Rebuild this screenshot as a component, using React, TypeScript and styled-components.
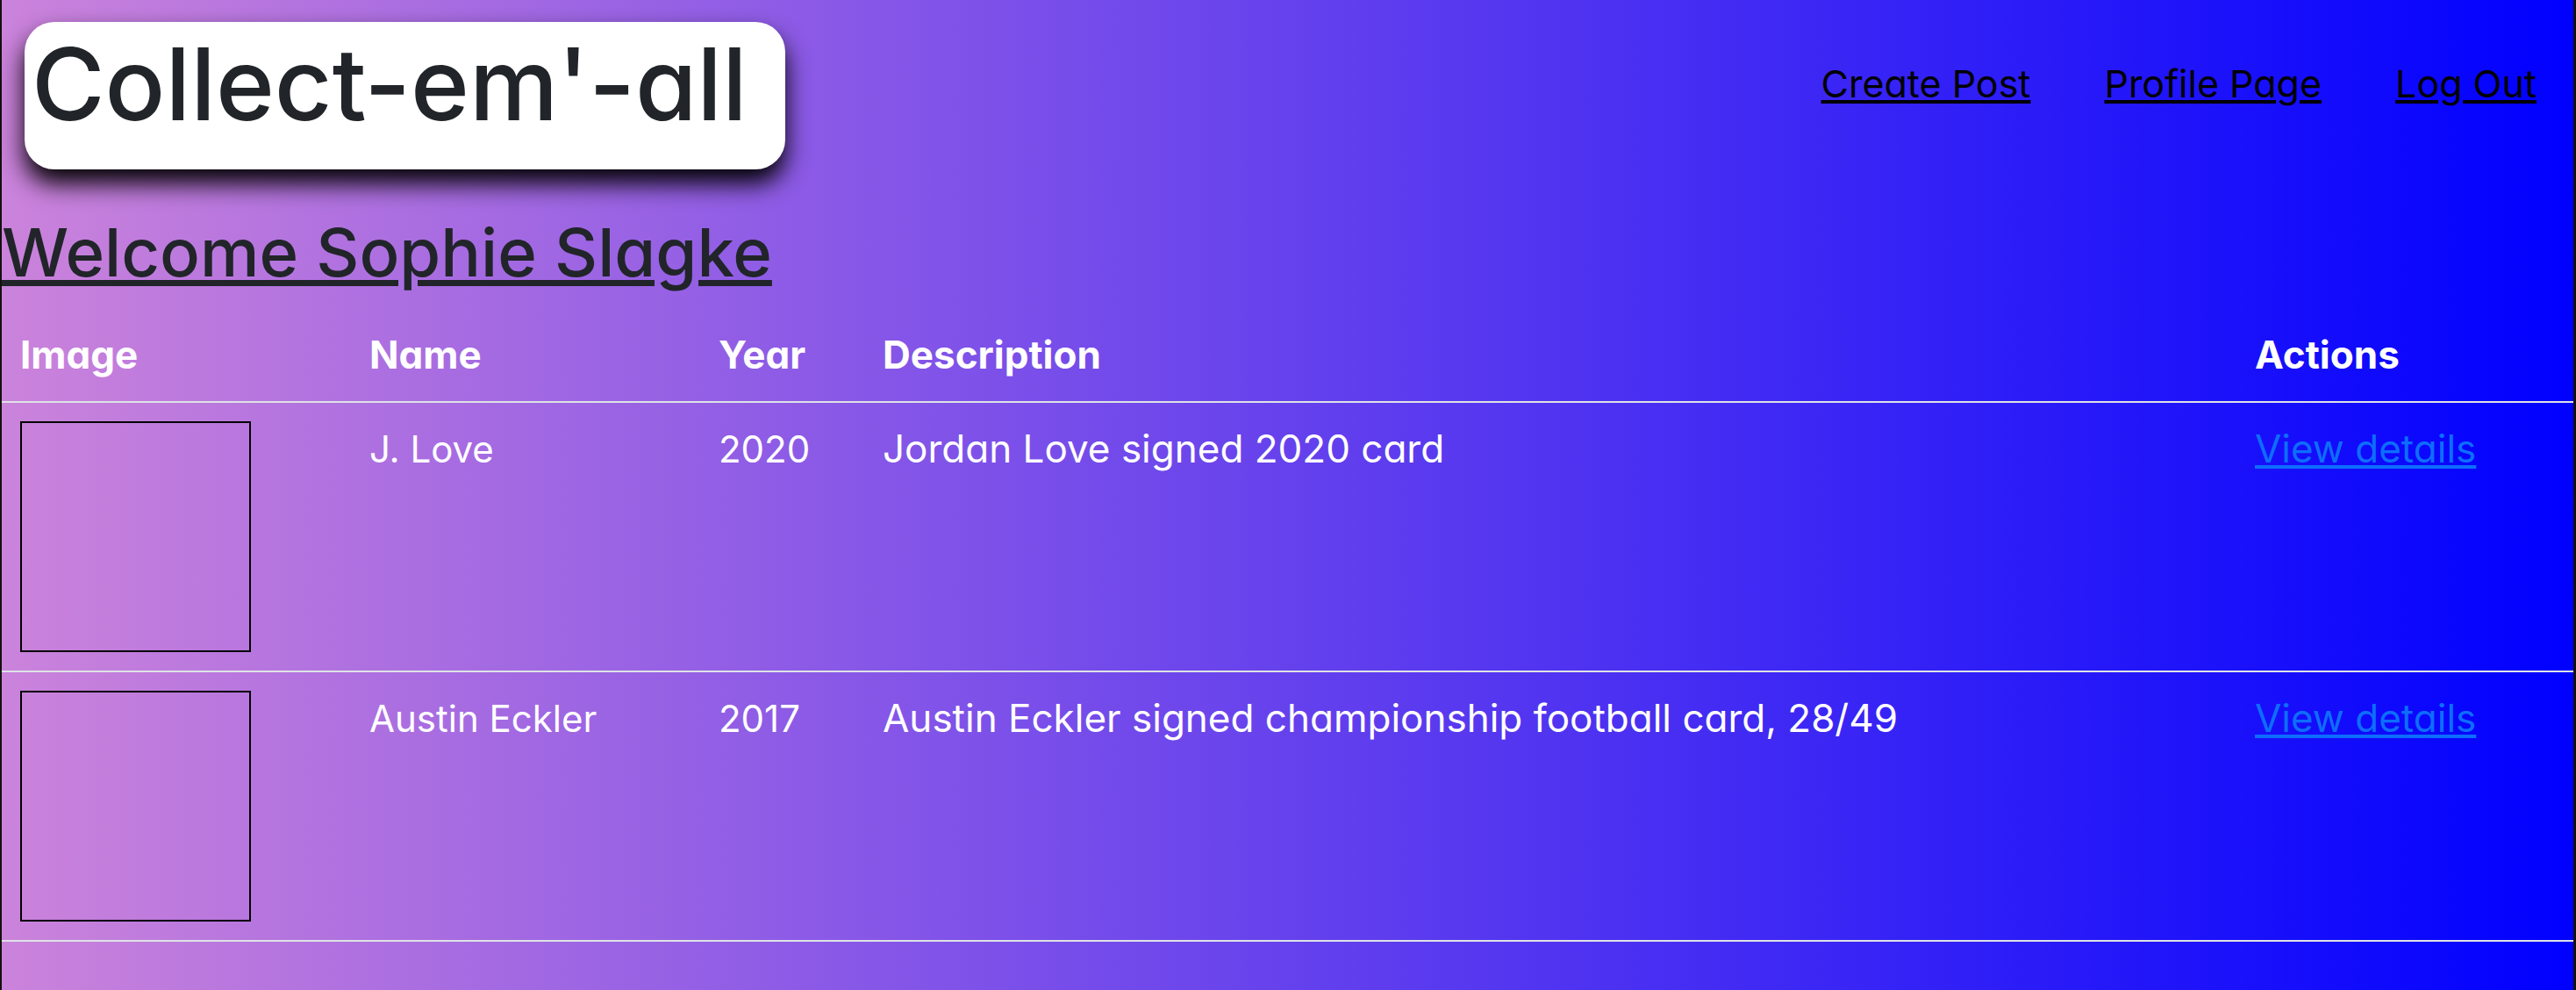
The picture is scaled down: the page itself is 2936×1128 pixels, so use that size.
import React from "react";
import styled, { createGlobalStyle } from "styled-components";

const GlobalStyle = createGlobalStyle`
  *, *::before, *::after { box-sizing: border-box; }
  body {
    margin: 0;
    background: #14100f;
    color: #212529;
    font-family: Inter, "Open Sans", "Liberation Sans", sans-serif;
    font-size: 44px;
    font-feature-settings: "cv11" 1;
    line-height: 63px;
  }
`;

const Page = styled.div`
  min-height: 100vh;
  margin: 0 3px 0 2px;
  background: linear-gradient(90deg, #cb83db 0%, #0000ff 100%);
`;

const Header = styled.header`
  display: flex;
  justify-content: space-between;
  align-items: flex-start;
  padding: 25px 42px 50px 26px;
`;

const Brand = styled.div`
  width: 867px;
  padding: 8px 8px 34px;
  border-radius: 34px;
  background: #fff;
  box-shadow: 0 16px 28px #000;
`;

const BrandTitle = styled.h1`
  margin: 0;
  font-size: 114px;
  font-weight: 500;
  line-height: 126px;
  white-space: nowrap;
`;

const Nav = styled.nav`
  display: flex;
  gap: 84px;
  padding-top: 39px;
  font-size: 43px;
`;

const TextLink = styled.a<{ $color: string }>`
  color: ${(p) => p.$color};
  text-decoration: underline;
  text-decoration-thickness: 4px;
  text-underline-offset: 3px;
  white-space: nowrap;
`;

const Welcome = styled.h2`
  margin: 0 0 21px;
  font-size: 76px;
  font-weight: 500;
  line-height: 88px;
  text-decoration: underline;
  text-decoration-thickness: 7px;
  text-underline-offset: 4px;
`;

const Table = styled.table`
  width: 100%;
  table-layout: fixed;
  border-collapse: collapse;
  color: #fff;
`;

const Column = styled.col<{ $share?: string }>`
  width: ${(p) => p.$share ?? "auto"};
`;

const Row = styled.tr`
  border-bottom: 2px solid #dee2e6;
`;

const HeadCell = styled.th`
  padding: 21px;
  font-weight: 700;
  text-align: left;
`;

const Cell = styled.td<{ $compact?: boolean }>`
  padding: 21px;
  font-size: ${(p) => (p.$compact ? "42px" : "44px")};
  vertical-align: top;
`;

const CardImage = styled.div`
  width: 263px;
  height: 263px;
  border: 2px solid #000;
`;

const links = ["Create Post", "Profile Page", "Log Out"];

const cards = [
  { name: "J. Love", year: 2020, description: "Jordan Love signed 2020 card" },
  {
    name: "Austin Eckler",
    year: 2017,
    description: "Austin Eckler signed championship football card, 28/49",
  },
];

export default function App() {
  return (
    <>
      <GlobalStyle />
      <Page>
        <Header>
          <Brand>
            <BrandTitle>Collect-em'-all</BrandTitle>
          </Brand>
          <Nav>
            {links.map((label) => (
              <TextLink key={label} href="#" $color="#000">
                {label}
              </TextLink>
            ))}
          </Nav>
        </Header>
        <main>
          <Welcome>Welcome Sophie Slagke</Welcome>
          <Table>
            <colgroup>
              <Column $share="398px" />
              <Column $share="398px" />
              <Column $share="187px" />
              <Column />
              <Column $share="384px" />
            </colgroup>
            <thead>
              <Row>
                <HeadCell>Image</HeadCell>
                <HeadCell>Name</HeadCell>
                <HeadCell>Year</HeadCell>
                <HeadCell>Description</HeadCell>
                <HeadCell>Actions</HeadCell>
              </Row>
            </thead>
            <tbody>
              {cards.map((card) => (
                <Row key={card.name}>
                  <Cell>
                    <CardImage />
                  </Cell>
                  <Cell $compact>{card.name}</Cell>
                  <Cell $compact>{card.year}</Cell>
                  <Cell>{card.description}</Cell>
                  <Cell>
                    <TextLink href="#" $color="#0d6efd">
                      View details
                    </TextLink>
                  </Cell>
                </Row>
              ))}
            </tbody>
          </Table>
        </main>
      </Page>
    </>
  );
}
